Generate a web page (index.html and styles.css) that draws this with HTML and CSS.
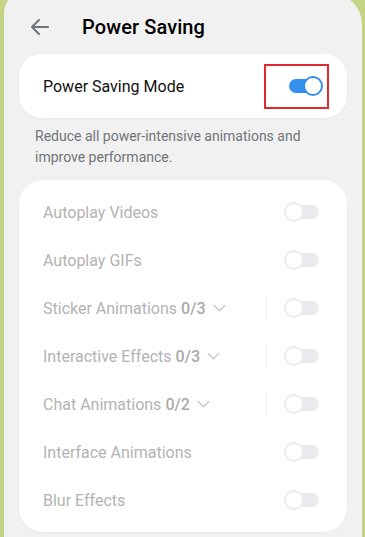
FILE: index.html
```html
<!DOCTYPE html>
<html>
<head>
<meta charset="utf-8">
<link rel="stylesheet" href="styles.css">
</head>
<body>
<div class="panel">
  <div class="header">
    <svg class="back" width="24" height="24" viewBox="0 0 24 24"><path d="M20 12H5M11 5l-7 7 7 7" fill="none" stroke="#707579" stroke-width="2" stroke-linecap="round" stroke-linejoin="round"/></svg>
    <h1 class="title">Power Saving</h1>
  </div>
  <div class="card main-card">
    <div class="row">
      <span class="label dark">Power Saving Mode</span>
      <div class="highlight">
        <span class="switch on"><span class="knob"></span></span>
      </div>
    </div>
  </div>
  <p class="desc">Reduce all power-intensive animations and improve performance.</p>
  <div class="card list">
    <div class="row"><span class="label">Autoplay Videos</span><span class="switch"><span class="knob"></span></span></div>
    <div class="row"><span class="label">Autoplay GIFs</span><span class="switch"><span class="knob"></span></span></div>
    <div class="row"><span class="label">Sticker Animations <b>0/3</b><svg class="chev" viewBox="0 0 14 8"><path d="M1 1l6 6 6-6" fill="none" stroke="#c4c6c8" stroke-width="1.3"/></svg></span><span class="sep"></span><span class="switch"><span class="knob"></span></span></div>
    <div class="row"><span class="label">Interactive Effects <b>0/3</b><svg class="chev" viewBox="0 0 14 8"><path d="M1 1l6 6 6-6" fill="none" stroke="#c4c6c8" stroke-width="1.3"/></svg></span><span class="sep"></span><span class="switch"><span class="knob"></span></span></div>
    <div class="row"><span class="label">Chat Animations <b>0/2</b><svg class="chev" viewBox="0 0 14 8"><path d="M1 1l6 6 6-6" fill="none" stroke="#c4c6c8" stroke-width="1.3"/></svg></span><span class="sep"></span><span class="switch"><span class="knob"></span></span></div>
    <div class="row"><span class="label">Interface Animations</span><span class="switch"><span class="knob"></span></span></div>
    <div class="row"><span class="label">Blur Effects</span><span class="switch"><span class="knob"></span></span></div>
  </div>
</div>
</body>
</html>
```
FILE: styles.css
```css
html, body {
  margin: 0;
  padding: 0;
  height: 100%;
}
body {
  background: #c3d485;
  font-family: Roboto, "Noto Sans", sans-serif;
  overflow: hidden;
}
.panel {
  margin: -6px 3px 0 4px;
  padding: 6px 15px 0 15px;
  background: #f1f1f1;
  border-radius: 18px 30px 0 0;
  height: 560px;
  box-sizing: border-box;
}
.header {
  display: flex;
  align-items: center;
  height: 54px;
  padding-left: 9px;
}
.back {
  display: block;
}
.title {
  margin: 0 0 0 30px;
  font-size: 20px;
  font-weight: 500;
  color: #000;
  letter-spacing: 0.1px;
}
.card {
  background: #fff;
  border-radius: 22px;
  box-shadow: 0 1px 3px rgba(0,0,0,0.04);
}
.main-card {
  height: 64px;
  display: flex;
  align-items: center;
}
.main-card .row {
  width: 100%;
}
.row {
  display: flex;
  align-items: center;
  height: 48px;
  padding: 0 28px 0 24px;
}
.label {
  flex: 1;
  font-size: 16px;
  color: #b3b3b3;
  display: flex;
  align-items: center;
}
.label.dark {
  color: #111;
}
.label b {
  font-weight: 500;
  margin-left: 4px;
  color: #aaaaaa;
}
.chev {
  width: 13px;
  height: 8px;
  margin-left: 7px;
}
.sep {
  width: 1px;
  height: 22px;
  background: #efefef;
  margin-right: 18px;
}
.highlight {
  border: 2px solid #e0282e;
  width: 65px;
  height: 45px;
  box-sizing: border-box;
  margin-right: -10px;
  display: flex;
  align-items: center;
  justify-content: flex-end;
  padding-right: 6px;
}
.switch {
  position: relative;
  width: 34px;
  height: 14px;
  border-radius: 7px;
  background: #eaebec;
  flex: none;
}
.switch .knob {
  position: absolute;
  left: -1px;
  top: -3px;
  width: 20px;
  height: 20px;
  box-sizing: border-box;
  border-radius: 50%;
  background: #fff;
  border: 2px solid #eaebec;
}
.switch.on {
  background: #3390ec;
  width: 32px;
}
.switch.on .knob {
  left: auto;
  right: -2px;
  border-color: #3390ec;
}
.desc {
  margin: 8px 0 0 16px;
  font-size: 14px;
  line-height: 21px;
  color: #707579;
  height: 54px;
}
.list {
  padding: 8px 0;
  border-radius: 24px;
}
```
